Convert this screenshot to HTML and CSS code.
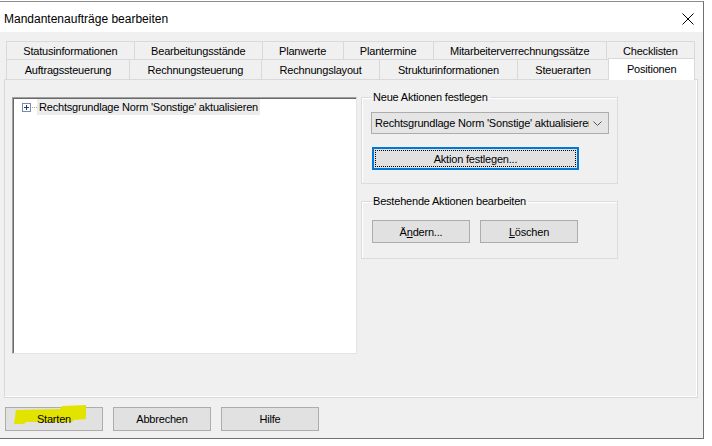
FILE: index.html
```html
<!DOCTYPE html>
<html lang="de">
<head>
    <meta charset="UTF-8">
    <title>Mandantenaufträge bearbeiten</title>
    <link rel="stylesheet" href="styles.css">
</head>
<body>
    <div class="window">
        <!-- Title bar -->
        <div class="titlebar">
            <span class="title">Mandantenaufträge bearbeiten</span>
            <svg class="close" width="12" height="12" viewBox="0 0 12 12">
                <path d="M0.5 0.5 L11.5 11.5 M11.5 0.5 L0.5 11.5" stroke="#000" stroke-width="1" fill="none"/>
            </svg>
        </div>

        <div class="client">
            <!-- Tabs -->
            <div class="tabs">
                <div class="tab-row row-back">
                    <div class="tab">Statusinformationen</div>
                    <div class="tab">Bearbeitungsstände</div>
                    <div class="tab">Planwerte</div>
                    <div class="tab">Plantermine</div>
                    <div class="tab">Mitarbeiterverrechnungssätze</div>
                    <div class="tab">Checklisten</div>
                </div>
                <div class="tab-row row-front">
                    <div class="tab">Auftragssteuerung</div>
                    <div class="tab">Rechnungsteuerung</div>
                    <div class="tab">Rechnungslayout</div>
                    <div class="tab">Strukturinformationen</div>
                    <div class="tab">Steuerarten</div>
                    <div class="tab active">Positionen</div>
                </div>

                <div class="panel">
                    <div class="tree">
                        <div class="tree-item">
                            <span class="expander">
                                <svg width="9" height="9" viewBox="0 0 9 9">
                                    <rect x="0.5" y="0.5" width="8" height="8" fill="#fff" stroke="#7a8aa8"/>
                                    <path d="M2 4.5 H7 M4.5 2 V7" stroke="#1c3c78" stroke-width="1"/>
                                </svg>
                            </span>
                            <span class="dots"></span>
                            <span class="tree-label">Rechtsgrundlage Norm 'Sonstige' aktualisieren</span>
                        </div>
                    </div>

                    <div class="side">
                        <fieldset class="group group-new">
                            <legend>Neue Aktionen festlegen</legend>
                            <div class="combo">
                                <span class="combo-text">Rechtsgrundlage Norm 'Sonstige' aktualisieren</span>
                                <svg class="chevron" width="9" height="5" viewBox="0 0 9 5">
                                    <path d="M0.5 0.5 L4.5 4.5 L8.5 0.5" stroke="#555" fill="none"/>
                                </svg>
                            </div>
                            <button class="btn btn-default btn-wide">Aktion festlegen...</button>
                        </fieldset>

                        <fieldset class="group group-edit">
                            <legend>Bestehende Aktionen bearbeiten</legend>
                            <div class="btn-row">
                                <button class="btn">Ä<u>n</u>dern...</button>
                                <button class="btn"><u>L</u>öschen</button>
                            </div>
                        </fieldset>
                    </div>
                </div>
            </div>

            <!-- Dialog buttons -->
            <div class="actions">
                <button class="btn btn-start">
                    <svg class="marker" width="72" height="19" viewBox="0 0 72 19">
                        <path d="M2 5 L46 4 L48 1 L72 0 L72 14 L60 15 L58 17 L12 17 L10 19 L0 19 Z" fill="#e3e300"/>
                    </svg>
                    <span class="btn-label">Starten</span>
                </button>
                <button class="btn">Abbrechen</button>
                <button class="btn">Hilfe</button>
            </div>
        </div>
    </div>
</body>
</html>
```

FILE: styles.css
```css
* {
    margin: 0;
    padding: 0;
    box-sizing: border-box;
}

body {
    font-family: 'Liberation Sans', Arial, sans-serif;
    font-size: 11px;
    letter-spacing: -0.2px;
    color: #000;
    background: #fff;
    width: 712px;
    height: 446px;
    overflow: hidden;
}

.window {
    width: 704px;
    height: 438px;
    margin-top: 1px;
    border-top: 1px solid #8c8c8c;
    border-right: 1px solid #707070;
    border-bottom: 1px solid #707070;
    display: flex;
    flex-direction: column;
}

/* Title bar */
.titlebar {
    height: 30px;
    background: #fff;
    display: flex;
    align-items: center;
    justify-content: space-between;
    padding: 4px 9px 0 4px;
}

.title {
    font-size: 12px;
    letter-spacing: 0;
}

/* Client area */
.client {
    flex: 1;
    background: #f0f0f0;
    padding: 9px 5px 0 4px;
    display: flex;
    flex-direction: column;
}

.tabs {
    display: flex;
    flex-direction: column;
}

.tab-row {
    display: flex;
    margin: 0 3px 0 2px;
}

.tab {
    flex: 1 1 auto;
    text-align: center;
    white-space: nowrap;
    padding: 0 12px;
    border: 1px solid #d9d9d9;
    border-bottom: none;
    margin-left: -1px;
    background: #f0f0f0;
}

.tab:first-child {
    margin-left: 0;
}

.row-back .tab {
    height: 18px;
    line-height: 18px;
}

.row-front .tab {
    height: 20px;
    line-height: 20px;
}

.row-front .tab.active {
    background: #fff;
    height: 22px;
    line-height: 20px;
    margin-top: -1px;
    margin-bottom: -1px;
    position: relative;
    z-index: 1;
}

/* Tab page */
.panel {
    height: 319px;
    border: 1px solid #d9d9d9;
    box-shadow: inset -1px -1px 0 #fff;
    display: flex;
    padding: 17px 0 0 7px;
}

.tree {
    width: 345px;
    height: 257px;
    background: #fff;
    border-top: 1px solid #a0a0a0;
    border-left: 1px solid #a0a0a0;
    border-right: 1px solid #e3e3e3;
    border-bottom: 1px solid #e3e3e3;
    box-shadow: inset 1px 1px 0 #696969;
    padding: 1px 0 0 9px;
}

.tree-item {
    display: flex;
    align-items: center;
    height: 16px;
}

.expander {
    display: flex;
    width: 9px;
    height: 9px;
}

.dots {
    width: 5px;
    height: 1px;
    margin: 0 0 0 1px;
    border-top: 1px dotted #a0a0a0;
}

.tree-label {
    background: #ececec;
    height: 16px;
    line-height: 16px;
    padding: 0 2px 0 2px;
}

/* Right side */
.side {
    margin-left: 4px;
    width: 257px;
    display: flex;
    flex-direction: column;
    margin-top: -6px;
}

.group {
    width: 257px;
    min-width: 0;
    border: 1px solid #dcdcdc;
    box-shadow: inset 1px 1px 0 #fff;
    padding: 0 8px 0 9px;
}

.group legend {
    margin-left: 1px;
    padding: 0 2px 0 1px;
    line-height: 13px;
}

.group-new {
    height: 93px;
    padding-top: 8px;
}

.group-edit {
    margin-top: 11px;
    height: 64px;
    padding-top: 12px;
}

.combo {
    height: 22px;
    border: 1px solid #adadad;
    background: #e5e5e5;
    display: flex;
    align-items: center;
    padding: 0 6px 0 3px;
    overflow: hidden;
}

.combo-text {
    flex: 1;
    min-width: 0;
    white-space: nowrap;
    overflow: hidden;
}

.chevron {
    margin-left: 4px;
    flex: none;
}

.btn {
    font-family: inherit;
    font-size: 11px;
    letter-spacing: -0.2px;
    color: #000;
    background: #e1e1e1;
    border: 1px solid #adadad;
    width: 98px;
    height: 24px;
}

.btn-wide {
    width: 207px;
    height: 23px;
    margin-top: 13px;
    margin-left: 1px;
}

.btn-default {
    border: 2px solid #0078d7;
    outline: 1px dotted #000;
    outline-offset: -4px;
}

.btn-row {
    display: flex;
    gap: 10px;
    margin-left: 1px;
}

.btn-row .btn {
    height: 23px;
}

/* Dialog buttons */
.actions {
    display: flex;
    gap: 10px;
    padding: 9px 0 0 1px;
}

.btn-start {
    position: relative;
}

.marker {
    position: absolute;
    left: 8px;
    top: -3px;
}

.btn-label {
    position: relative;
}
```
